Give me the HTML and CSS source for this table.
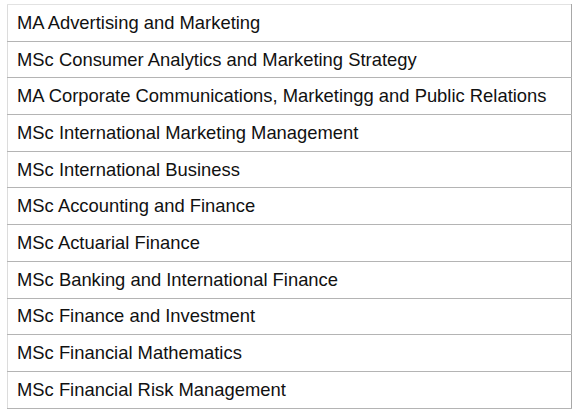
FILE: index.html
```html
<!DOCTYPE html>
<html>
<head>
<meta charset="utf-8">
<link rel="stylesheet" href="styles.css">
</head>
<body>
<table class="programmes">
<tbody>
<tr><td>MA Advertising and Marketing</td></tr>
<tr><td>MSc Consumer Analytics and Marketing Strategy</td></tr>
<tr><td>MA Corporate Communications, Marketingg and Public Relations</td></tr>
<tr><td>MSc International Marketing Management</td></tr>
<tr><td>MSc International Business</td></tr>
<tr><td>MSc Accounting and Finance</td></tr>
<tr><td>MSc Actuarial Finance</td></tr>
<tr><td>MSc Banking and International Finance</td></tr>
<tr><td>MSc Finance and Investment</td></tr>
<tr><td>MSc Financial Mathematics</td></tr>
<tr><td>MSc Financial Risk Management</td></tr>
</tbody>
</table>
</body>
</html>
```
FILE: styles.css
```css
html, body {
  margin: 0;
  padding: 0;
  background: #ffffff;
}
body {
  padding: 4px 0 0 7px;
  font-family: "Liberation Sans", Arial, sans-serif;
  color: #111111;
}
.programmes {
  border-collapse: collapse;
  width: 565px;
  border-top: 1px solid #e2e2e2;
  border-left: 1px solid #dcdcdc;
  border-right: 1px solid #a8a8a8;
  border-bottom: 1px solid #a8a8a8;
}
.programmes td {
  height: 36.7px;
  padding: 0 9px;
  font-size: 18.4px;
  border-bottom: 1px solid #b4b4b4;
  box-sizing: border-box;
}
```
